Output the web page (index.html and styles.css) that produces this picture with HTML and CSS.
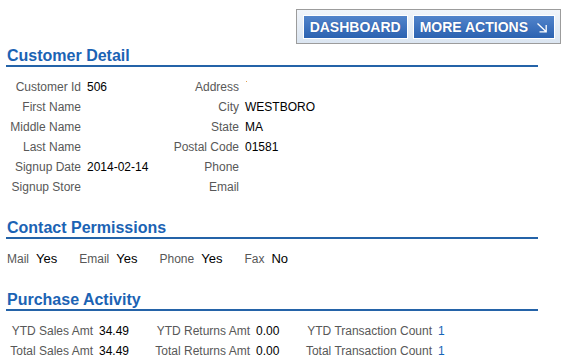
FILE: index.html
```html
<!DOCTYPE html>
<html lang="en">
<head>
<meta charset="utf-8">
<title>Customer Detail</title>
<link rel="stylesheet" href="styles.css">
</head>
<body>
<div class="toolbar-row">
  <div class="toolbar">
    <a class="btn" href="#">DASHBOARD</a>
    <a class="btn" href="#">MORE ACTIONS <svg class="btn-icon" width="12" height="11" viewBox="0 0 12 11"><path d="M1.5 1.5 L10.2 9.8 M3.5 9.8 H10.2 V3" fill="none" stroke="#fff" stroke-width="1.3"/></svg></a>
  </div>
</div>
<div class="page">
  <section class="section">
    <h2 class="section-title">Customer Detail</h2>
    <div class="detail-grid">
      <span class="label">Customer Id</span><span class="value">506</span>
      <span class="label">Address</span><span class="value"><span class="speck"></span></span>
      <span class="label">First Name</span><span class="value"></span>
      <span class="label">City</span><span class="value">WESTBORO</span>
      <span class="label">Middle Name</span><span class="value"></span>
      <span class="label">State</span><span class="value">MA</span>
      <span class="label">Last Name</span><span class="value"></span>
      <span class="label">Postal Code</span><span class="value">01581</span>
      <span class="label">Signup Date</span><span class="value">2014-02-14</span>
      <span class="label">Phone</span><span class="value"></span>
      <span class="label">Signup Store</span><span class="value"></span>
      <span class="label">Email</span><span class="value"></span>
    </div>
  </section>
  <section class="section">
    <h2 class="section-title">Contact Permissions</h2>
    <div class="perm-row">
      <span class="perm"><span class="label">Mail</span><span class="perm-value">Yes</span></span>
      <span class="perm"><span class="label">Email</span><span class="perm-value">Yes</span></span>
      <span class="perm"><span class="label">Phone</span><span class="perm-value">Yes</span></span>
      <span class="perm"><span class="label">Fax</span><span class="perm-value">No</span></span>
    </div>
  </section>
  <section class="section">
    <h2 class="section-title">Purchase Activity</h2>
    <div class="purchase-grid">
      <span class="label">YTD Sales Amt</span><span class="value">34.49</span>
      <span class="label">YTD Returns Amt</span><span class="value">0.00</span>
      <span class="label">YTD Transaction Count</span><span class="value link">1</span>
      <span class="label">Total Sales Amt</span><span class="value">34.49</span>
      <span class="label">Total Returns Amt</span><span class="value">0.00</span>
      <span class="label">Total Transaction Count</span><span class="value link">1</span>
    </div>
  </section>
</div>
</body>
</html>
```
FILE: styles.css
```css
html, body {
  margin: 0;
  padding: 0;
  background: #ffffff;
}
body {
  font-family: "Liberation Sans", Arial, sans-serif;
  font-size: 12px;
  color: #000;
  width: 564px;
}
.toolbar-row {
  display: flex;
  justify-content: flex-end;
  padding: 9px 3px 0 0;
}
.toolbar {
  display: flex;
  gap: 5px;
  padding: 5px 5px 4px 6px;
  border: 1px solid #9c9c9c;
  background: linear-gradient(#f1f5fa, #dbe5f1);
}
.btn {
  display: flex;
  align-items: center;
  gap: 8px;
  height: 22px;
  padding: 0 6px 0 6px;
  border: 1px solid #ffffff;
  background: linear-gradient(#5284cb, #2b62b1);
  color: #ffffff;
  text-decoration: none;
  font-weight: bold;
  font-size: 14px;
  line-height: 22px;
  text-shadow: 0 0 1px rgba(20, 50, 110, 0.6);
}
.btn-icon {
  display: block;
}
.page {
  width: 532px;
  margin-left: 6px;
}
.section-title {
  margin: 22px 0 0 0;
  padding: 0 0 0 1px;
  height: 18px;
  font-size: 16px;
  line-height: 18px;
  font-weight: bold;
  color: #1b63b4;
  border-bottom: 2px solid #2463a8;
}
.section:first-child .section-title {
  margin-top: 3px;
}
.label {
  color: #585858;
}
.value {
  color: #000;
}
.link {
  color: #1766b8;
}
.detail-grid {
  margin-top: 10px;
  display: grid;
  grid-template-columns: 81px 78px 80px auto;
  grid-auto-rows: 20px;
  line-height: 20px;
}
.detail-grid .label,
.purchase-grid .label {
  text-align: right;
  padding-right: 6px;
  white-space: nowrap;
}
.speck {
  display: inline-block;
  width: 1px;
  height: 1px;
  margin-left: 1px;
  vertical-align: 9px;
  background: #e2a050;
}
.perm-row {
  margin-top: 10px;
  padding-left: 1px;
  display: flex;
  gap: 22px;
  line-height: 20px;
}
.perm .label {
  margin-right: 7px;
}
.perm-value {
  font-size: 13px;
  color: #000;
}
.purchase-grid {
  margin-top: 10px;
  display: grid;
  grid-template-columns: 93px 53px 104px 46px 136px auto;
  grid-auto-rows: 20px;
  line-height: 20px;
}
```
